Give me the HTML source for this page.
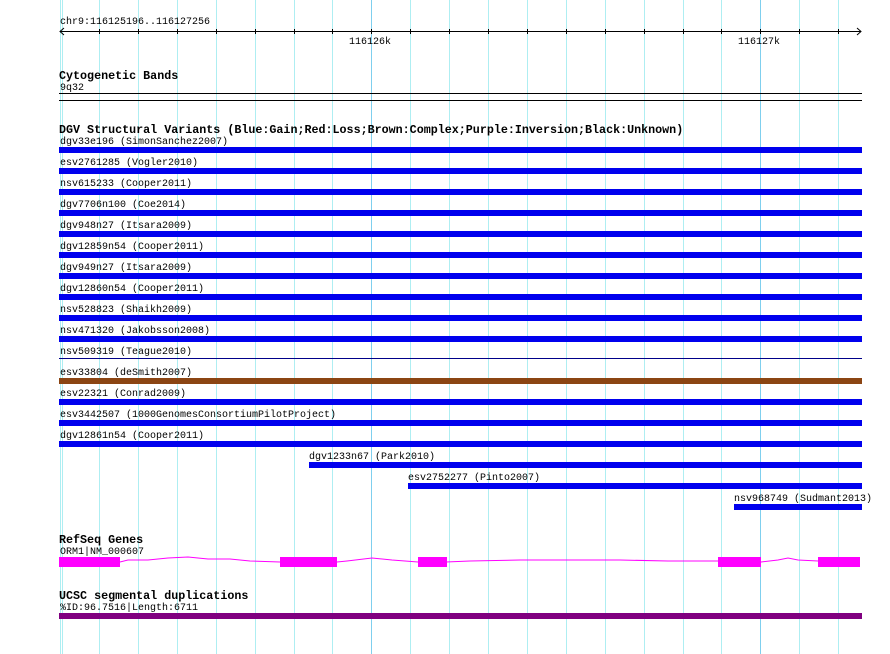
<!DOCTYPE html>
<html><head><meta charset="utf-8"><style>
body{margin:0;width:890px;height:654px;background:#fff;overflow:hidden;position:relative;font-family:"Liberation Mono","DejaVu Sans Mono",monospace;}
.t{position:absolute;font-size:10px;line-height:10px;color:#000;white-space:pre;margin-top:2px;}
.h{position:absolute;font-size:11.7px;line-height:12px;font-weight:bold;color:#000;white-space:pre;margin-top:2px;}
</style></head><body>
<svg width="890" height="654" style="position:absolute;left:0;top:0">
<g stroke="#aeeef2" stroke-width="1">
<line x1="62.5" y1="0" x2="62.5" y2="654"/>
<line x1="60.5" y1="0" x2="60.5" y2="654"/>
<line x1="99.5" y1="0" x2="99.5" y2="654"/>
<line x1="138.5" y1="0" x2="138.5" y2="654"/>
<line x1="177.5" y1="0" x2="177.5" y2="654"/>
<line x1="216.5" y1="0" x2="216.5" y2="654"/>
<line x1="255.5" y1="0" x2="255.5" y2="654"/>
<line x1="294.5" y1="0" x2="294.5" y2="654"/>
<line x1="332.5" y1="0" x2="332.5" y2="654"/>
<line x1="410.5" y1="0" x2="410.5" y2="654"/>
<line x1="449.5" y1="0" x2="449.5" y2="654"/>
<line x1="488.5" y1="0" x2="488.5" y2="654"/>
<line x1="527.5" y1="0" x2="527.5" y2="654"/>
<line x1="566.5" y1="0" x2="566.5" y2="654"/>
<line x1="605.5" y1="0" x2="605.5" y2="654"/>
<line x1="644.5" y1="0" x2="644.5" y2="654"/>
<line x1="683.5" y1="0" x2="683.5" y2="654"/>
<line x1="721.5" y1="0" x2="721.5" y2="654"/>
<line x1="799.5" y1="0" x2="799.5" y2="654"/>
<line x1="838.5" y1="0" x2="838.5" y2="654"/>
</g>
<g stroke="#7fcfee" stroke-width="1">
<line x1="371.5" y1="0" x2="371.5" y2="654"/>
<line x1="760.5" y1="0" x2="760.5" y2="654"/>
</g>
<g stroke="#000" stroke-width="1" fill="none">
<line x1="60" y1="31.5" x2="861" y2="31.5"/>
<polyline points="64,28 60,31.5 64,35"/>
<polyline points="857,28 861,31.5 857,35"/>
<path d="M99.5 29v5M138.5 29v5M177.5 29v5M216.5 29v5M255.5 29v5M294.5 29v5M332.5 29v5M371.5 29v5M410.5 29v5M449.5 29v5M488.5 29v5M527.5 29v5M566.5 29v5M605.5 29v5M644.5 29v5M683.5 29v5M721.5 29v5M760.5 29v5M799.5 29v5M838.5 29v5"/>
<line x1="59" y1="93.5" x2="862" y2="93.5"/>
<line x1="59" y1="100.5" x2="862" y2="100.5"/>
</g>
<g fill="#0000ee">
<rect x="59" y="147" width="803" height="6"/>
<rect x="59" y="168" width="803" height="6"/>
<rect x="59" y="189" width="803" height="6"/>
<rect x="59" y="210" width="803" height="6"/>
<rect x="59" y="231" width="803" height="6"/>
<rect x="59" y="252" width="803" height="6"/>
<rect x="59" y="273" width="803" height="6"/>
<rect x="59" y="294" width="803" height="6"/>
<rect x="59" y="315" width="803" height="6"/>
<rect x="59" y="336" width="803" height="6"/>
<rect x="59" y="358" width="803" height="1" fill="#000088"/>
<rect x="59" y="399" width="803" height="6"/>
<rect x="59" y="420" width="803" height="6"/>
<rect x="59" y="441" width="803" height="6"/>
<rect x="309" y="462" width="553" height="6"/>
<rect x="408" y="483" width="454" height="6"/>
<rect x="734" y="504" width="128" height="6"/>
</g>
<rect x="59" y="378" width="803" height="6" fill="#8b4513"/>
<polyline fill="none" stroke="#ff00ff" stroke-width="1" points="120,562 128,560 148,560 168,558 188,557 208,559 230,559 250,561 280,562 337,562 347,561 372,558 392,560 418,562 446,562 470,561 520,560 570,560 620,560 668,561 718,561 761,562 778,560 788,558 798,560 818,561"/>
<g fill="#ff00ff">
<rect x="59" y="557" width="61" height="10"/>
<rect x="280" y="557" width="57" height="10"/>
<rect x="418" y="557" width="29" height="10"/>
<rect x="718" y="557" width="43" height="10"/>
<rect x="818" y="557" width="42" height="10"/>
</g>
<rect x="59" y="613" width="803" height="6" fill="#800080"/>
</svg>
<div class="t" style="left:60px;top:16px">chr9:116125196..116127256</div>
<div class="t" style="left:349px;top:36px">116126k</div>
<div class="t" style="left:738px;top:36px">116127k</div>
<div class="h" style="left:59px;top:68px">Cytogenetic Bands</div>
<div class="t" style="left:60px;top:82px">9q32</div>
<div class="h" style="left:59px;top:122px">DGV Structural Variants (Blue:Gain;Red:Loss;Brown:Complex;Purple:Inversion;Black:Unknown)</div>
<div class="t" style="left:60px;top:136px">dgv33e196 (SimonSanchez2007)</div>
<div class="t" style="left:60px;top:157px">esv2761285 (Vogler2010)</div>
<div class="t" style="left:60px;top:178px">nsv615233 (Cooper2011)</div>
<div class="t" style="left:60px;top:199px">dgv7706n100 (Coe2014)</div>
<div class="t" style="left:60px;top:220px">dgv948n27 (Itsara2009)</div>
<div class="t" style="left:60px;top:241px">dgv12859n54 (Cooper2011)</div>
<div class="t" style="left:60px;top:262px">dgv949n27 (Itsara2009)</div>
<div class="t" style="left:60px;top:283px">dgv12860n54 (Cooper2011)</div>
<div class="t" style="left:60px;top:304px">nsv528823 (Shaikh2009)</div>
<div class="t" style="left:60px;top:325px">nsv471320 (Jakobsson2008)</div>
<div class="t" style="left:60px;top:346px">nsv509319 (Teague2010)</div>
<div class="t" style="left:60px;top:367px">esv33804 (deSmith2007)</div>
<div class="t" style="left:60px;top:388px">esv22321 (Conrad2009)</div>
<div class="t" style="left:60px;top:409px">esv3442507 (1000GenomesConsortiumPilotProject)</div>
<div class="t" style="left:60px;top:430px">dgv12861n54 (Cooper2011)</div>
<div class="t" style="left:309px;top:451px">dgv1233n67 (Park2010)</div>
<div class="t" style="left:408px;top:472px">esv2752277 (Pinto2007)</div>
<div class="t" style="left:734px;top:493px">nsv968749 (Sudmant2013)</div>
<div class="h" style="left:59px;top:532px">RefSeq Genes</div>
<div class="t" style="left:60px;top:546px">ORM1|NM_000607</div>
<div class="h" style="left:59px;top:588px">UCSC segmental duplications</div>
<div class="t" style="left:60px;top:602px">%ID:96.7516|Length:6711</div>
</body></html>
